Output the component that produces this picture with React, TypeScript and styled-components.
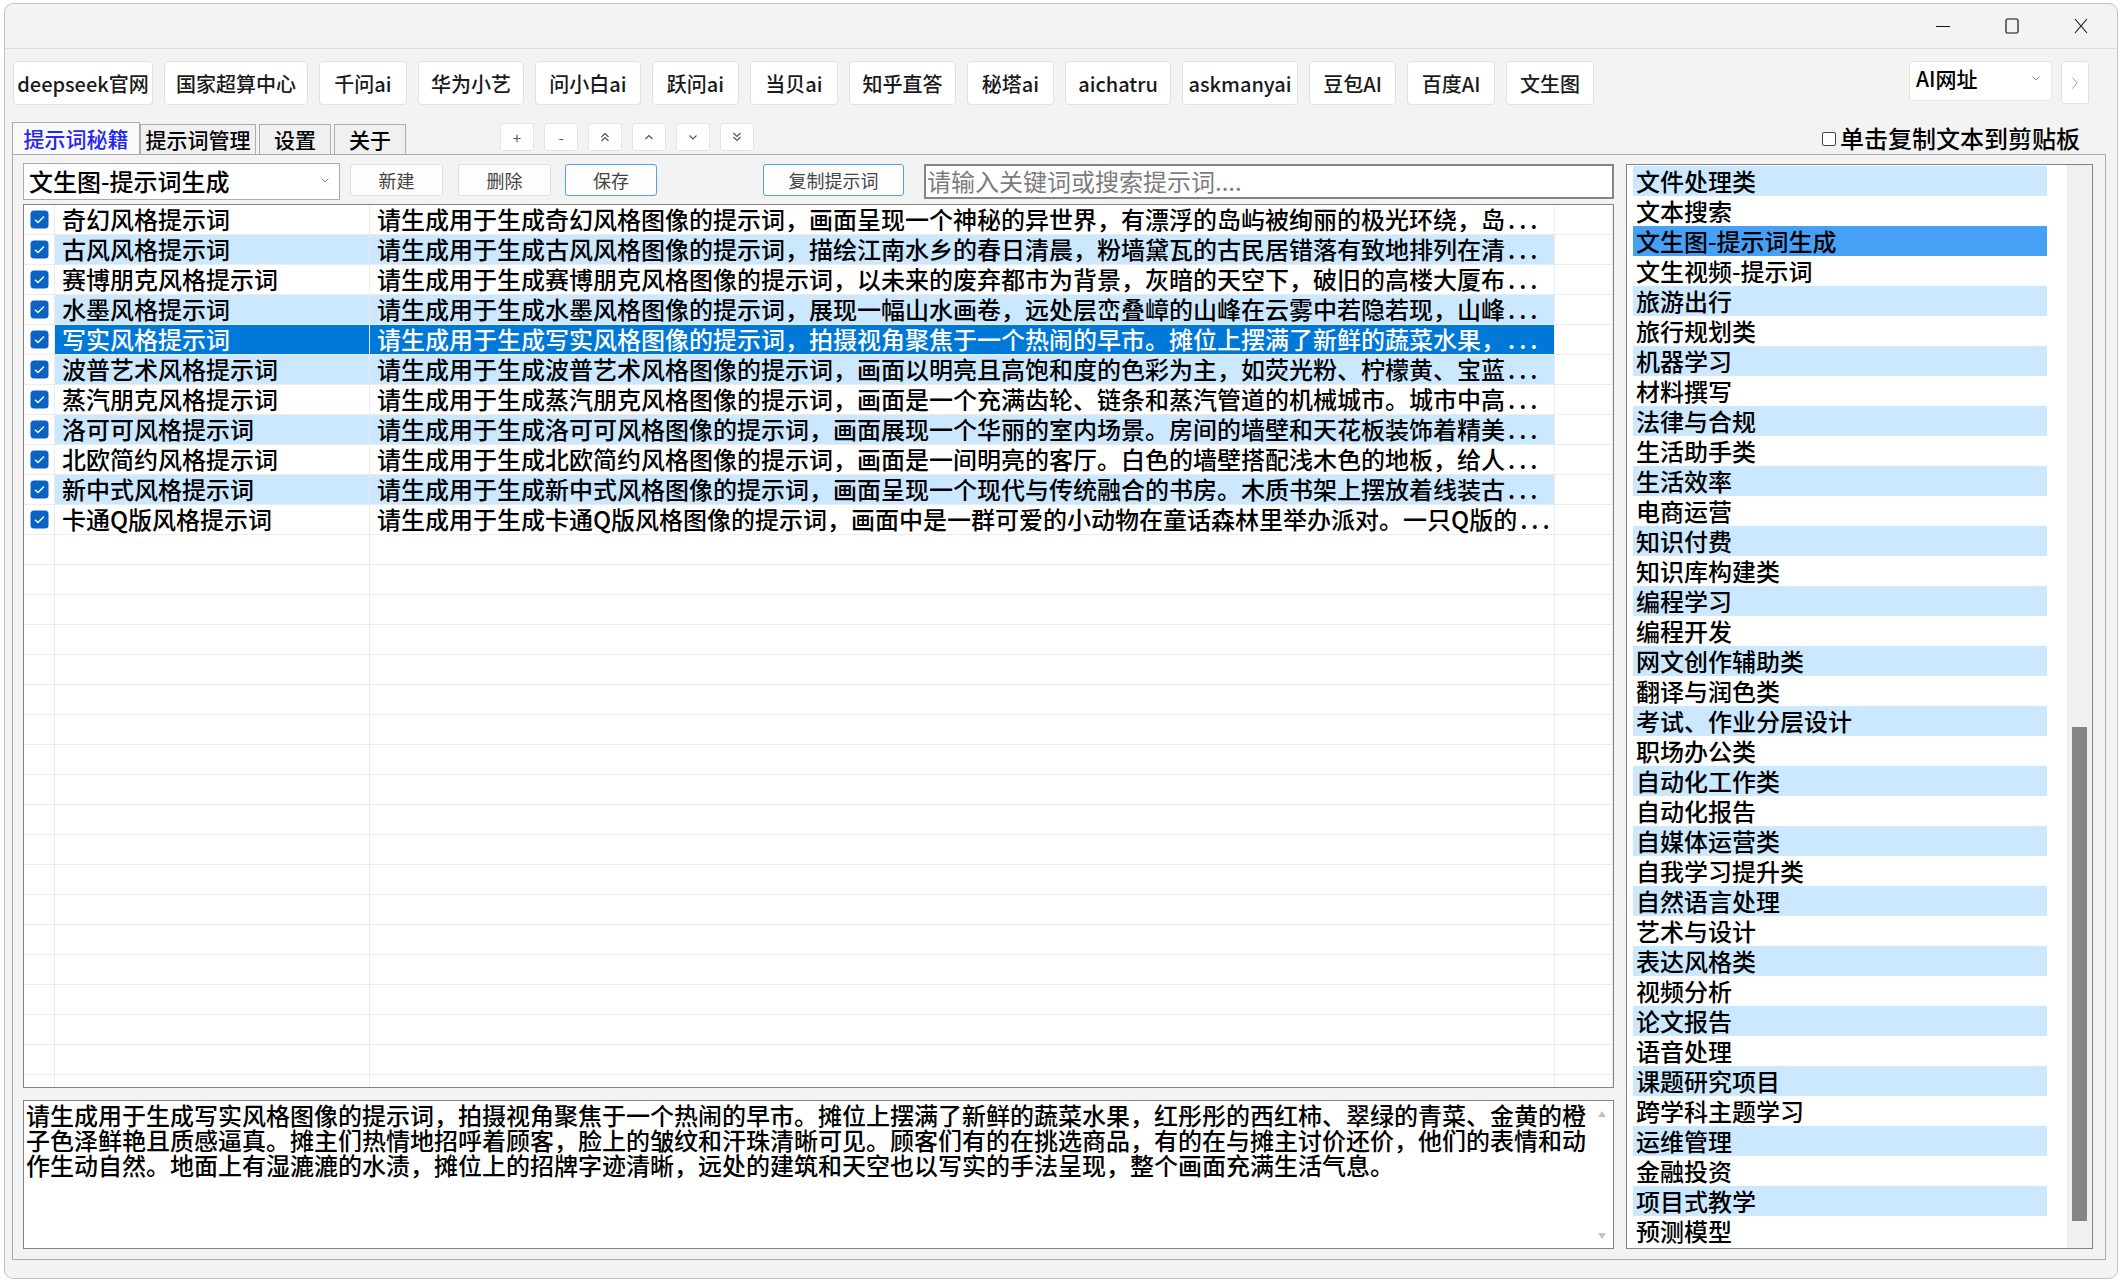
import React from 'react';
import styled, { createGlobalStyle } from 'styled-components';

const GlobalStyle = createGlobalStyle`
  html, body {
    margin: 0;
    padding: 0;
    background: #ffffff;
  }
  body {
    font-family: "Noto Sans CJK SC", "Noto Sans", sans-serif;
    color: #000;
  }
  * {
    box-sizing: border-box;
  }
`;

const links = [
  { label: 'deepseek官网', w: 140 },
  { label: '国家超算中心', w: 144 },
  { label: '千问ai', w: 88 },
  { label: '华为小艺', w: 106 },
  { label: '问小白ai', w: 106 },
  { label: '跃问ai', w: 87 },
  { label: '当贝ai', w: 88 },
  { label: '知乎直答', w: 107 },
  { label: '秘塔ai', w: 87 },
  { label: 'aichatru', w: 106 },
  { label: 'askmanyai', w: 116 },
  { label: '豆包AI', w: 87 },
  { label: '百度AI', w: 88 },
  { label: '文生图', w: 88 },
];

const tabs = [
  { label: '提示词秘籍', w: 128, ml: 0, active: true },
  { label: '提示词管理', w: 116, ml: 0, active: false },
  { label: '设置', w: 72, ml: 3, active: false },
  { label: '关于', w: 72, ml: 3, active: false },
];

const prompts = [
  ['奇幻风格提示词', '请生成用于生成奇幻风格图像的提示词，画面呈现一个神秘的异世界，有漂浮的岛屿被绚丽的极光环绕，岛'],
  ['古风风格提示词', '请生成用于生成古风风格图像的提示词，描绘江南水乡的春日清晨，粉墙黛瓦的古民居错落有致地排列在清'],
  ['赛博朋克风格提示词', '请生成用于生成赛博朋克风格图像的提示词，以未来的废弃都市为背景，灰暗的天空下，破旧的高楼大厦布'],
  ['水墨风格提示词', '请生成用于生成水墨风格图像的提示词，展现一幅山水画卷，远处层峦叠嶂的山峰在云雾中若隐若现，山峰'],
  ['写实风格提示词', '请生成用于生成写实风格图像的提示词，拍摄视角聚焦于一个热闹的早市。摊位上摆满了新鲜的蔬菜水果，'],
  ['波普艺术风格提示词', '请生成用于生成波普艺术风格图像的提示词，画面以明亮且高饱和度的色彩为主，如荧光粉、柠檬黄、宝蓝'],
  ['蒸汽朋克风格提示词', '请生成用于生成蒸汽朋克风格图像的提示词，画面是一个充满齿轮、链条和蒸汽管道的机械城市。城市中高'],
  ['洛可可风格提示词', '请生成用于生成洛可可风格图像的提示词，画面展现一个华丽的室内场景。房间的墙壁和天花板装饰着精美'],
  ['北欧简约风格提示词', '请生成用于生成北欧简约风格图像的提示词，画面是一间明亮的客厅。白色的墙壁搭配浅木色的地板，给人'],
  ['新中式风格提示词', '请生成用于生成新中式风格图像的提示词，画面呈现一个现代与传统融合的书房。木质书架上摆放着线装古'],
  ['卡通Q版风格提示词', '请生成用于生成卡通Q版风格图像的提示词，画面中是一群可爱的小动物在童话森林里举办派对。一只Q版的'],
];

const categories = [
  '文件处理类', '文本搜索', '文生图-提示词生成', '文生视频-提示词', '旅游出行', '旅行规划类',
  '机器学习', '材料撰写', '法律与合规', '生活助手类', '生活效率', '电商运营', '知识付费',
  '知识库构建类', '编程学习', '编程开发', '网文创作辅助类', '翻译与润色类', '考试、作业分层设计',
  '职场办公类', '自动化工作类', '自动化报告', '自媒体运营类', '自我学习提升类', '自然语言处理',
  '艺术与设计', '表达风格类', '视频分析', '论文报告', '语音处理', '课题研究项目', '跨学科主题学习',
  '运维管理', '金融投资', '项目式教学', '预测模型',
];

const detailText =
  '请生成用于生成写实风格图像的提示词，拍摄视角聚焦于一个热闹的早市。摊位上摆满了新鲜的蔬菜水果，红彤彤的西红柿、翠绿的青菜、金黄的橙\n' +
  '子色泽鲜艳且质感逼真。摊主们热情地招呼着顾客，脸上的皱纹和汗珠清晰可见。顾客们有的在挑选商品，有的在与摊主讨价还价，他们的表情和动\n' +
  '作生动自然。地面上有湿漉漉的水渍，摊位上的招牌字迹清晰，远处的建筑和天空也以写实的手法呈现，整个画面充满生活气息。';

const SELECTED_ROW = 4;
const SELECTED_CAT = 2;
const EMPTY_ROWS = 18;

const Window = styled.div`
  width: 2114px;
  height: 1276px;
  margin: 3px 0 0 4px;
  background: #f3f3f3;
  border: 1px solid #c4c4c4;
  border-radius: 9px;
  overflow: hidden;
  display: flex;
  flex-direction: column;
`;

const TitleBar = styled.div`
  height: 45px;
  flex: none;
  display: flex;
  justify-content: flex-end;
  align-items: center;
  padding-right: 2px;
  border-bottom: 1px solid #dcdcdc;
`;

const WinControl = styled.div`
  width: 69px;
  height: 44px;
  display: flex;
  align-items: center;
  justify-content: center;
`;

const Toolbar = styled.div`
  flex: none;
  margin-top: 12px;
  height: 44px;
  display: flex;
  align-items: flex-start;
  gap: 11px;
  padding: 0 28px 0 8px;
`;

const ToolButton = styled.button<{ $w: number }>`
  width: ${(p) => p.$w}px;
  height: 44px;
  flex: none;
  padding: 0;
  background: #ffffff;
  border: 1px solid #e2e2e2;
  border-radius: 4px;
  font-family: inherit;
  font-size: 20px;
  font-weight: 500;
  color: #1a1a1a;
  white-space: nowrap;
`;

const UrlSelect = styled.div`
  margin-left: auto;
  width: 143px;
  height: 40px;
  display: flex;
  align-items: center;
  justify-content: space-between;
  padding: 0 10px 6px 6px;
  background: #ffffff;
  border: 1px solid #e6e6e6;
  border-radius: 3px;
  font-size: 21px;
  font-weight: 500;
`;

const NextButton = styled.div`
  width: 28px;
  height: 43px;
  margin-left: -2px;
  display: flex;
  align-items: center;
  justify-content: center;
  background: #ffffff;
  border: 1px solid #e2e2e2;
  border-radius: 3px;
`;

const TabRow = styled.div`
  flex: none;
  margin-top: 17px;
  height: 32px;
  display: flex;
  align-items: flex-end;
  padding: 0 37px 0 7px;
`;

const Tab = styled.div<{ $w: number; $ml: number; $active: boolean }>`
  width: ${(p) => p.$w}px;
  margin-left: ${(p) => p.$ml}px;
  height: ${(p) => (p.$active ? 32 : 30)}px;
  display: flex;
  align-items: center;
  justify-content: center;
  border: 1px solid #acacac;
  border-bottom: none;
  background: ${(p) => (p.$active ? '#f9f9f9' : '#f0f0f0')};
  color: ${(p) => (p.$active ? '#2626f2' : '#000000')};
  font-size: 21px;
  font-weight: 500;
  padding-bottom: 2px;
`;

const MiniGroup = styled.div`
  display: flex;
  gap: 10px;
  margin-left: 94px;
  align-self: flex-start;
  margin-top: 1px;
`;

const MiniButton = styled.div`
  width: 34px;
  height: 28px;
  display: flex;
  align-items: center;
  justify-content: center;
  background: #ffffff;
  border: 1px solid #e4e4e4;
  border-radius: 3px;
  color: #555;
  font-size: 15px;
`;

const CopyOption = styled.label`
  margin-left: auto;
  align-self: center;
  display: flex;
  align-items: center;
  gap: 4px;
  font-size: 24px;
  font-weight: 500;
  line-height: 28px;
`;

const TinyBox = styled.span`
  width: 14px;
  height: 14px;
  border: 1px solid #444;
  border-radius: 2px;
  background: #fff;
  margin-top: 2px;
`;

const Panel = styled.div`
  flex: none;
  height: 1106px;
  margin: 0 11px 0 7px;
  border: 1px solid #acacac;
  background: #f3f3f3;
  display: grid;
  grid-template-columns: 1591px 1fr;
  column-gap: 12px;
  padding: 8px 12px 10px 10px;
`;

const LeftCol = styled.div`
  display: flex;
  flex-direction: column;
  min-height: 0;
`;

const Controls = styled.div`
  height: 37px;
  flex: none;
  display: flex;
  align-items: flex-start;
`;

const Combo = styled.div`
  width: 317px;
  height: 37px;
  display: flex;
  align-items: center;
  justify-content: space-between;
  padding: 0 9px 2px 5px;
  background: #fff;
  border: 1px solid #ababab;
  font-size: 24px;
  font-weight: 500;
`;

const ActionButton = styled.button<{ $w: number; $ml: number; $primary?: boolean }>`
  width: ${(p) => p.$w}px;
  margin-left: ${(p) => p.$ml}px;
  margin-top: 1px;
  height: 32px;
  padding: 0;
  background: #fdfdfd;
  border: 1px solid ${(p) => (p.$primary ? '#5a9ce4' : '#dedede')};
  border-radius: 3px;
  font-family: inherit;
  font-size: 18px;
  color: #444;
`;

const Search = styled.input`
  flex: 1;
  min-width: 0;
  margin-left: 20px;
  margin-top: 1px;
  height: 35px;
  border: 2px solid #858585;
  background: #fff;
  padding: 0 0 2px 1px;
  font-family: inherit;
  font-size: 24px;
  outline: none;
  &::placeholder {
    color: #7c7c7c;
  }
`;

const Table = styled.div`
  margin-top: 4px;
  height: 884px;
  flex: none;
  display: flex;
  flex-direction: column;
  border: 1px solid #828282;
  background: #fff;
`;

const Row = styled.div`
  flex: none;
  display: grid;
  grid-template-columns: 31px 315px 1185px 1fr;
  height: 30px;
`;

const Filler = styled.div`
  flex: 1;
  display: grid;
  grid-template-columns: 31px 315px 1185px 1fr;
  & > div {
    border-right: 1px solid #ececec;
  }
`;

const Cell = styled.div<{ $tone?: 'plain' | 'alt' | 'sel' }>`
  border-right: 1px solid #ececec;
  border-bottom: 1px solid #ececec;
  background: ${(p) => (p.$tone === 'alt' ? '#cce8ff' : p.$tone === 'sel' ? '#0078d7' : '#ffffff')};
  color: ${(p) => (p.$tone === 'sel' ? '#ffffff' : '#000000')};
  font-size: 24px;
  font-weight: 500;
  line-height: 28px;
  white-space: nowrap;
  padding-left: 7px;
`;

const CheckCell = styled.div`
  border-right: 1px solid #ececec;
  border-bottom: 1px solid #ececec;
  display: flex;
  align-items: center;
  justify-content: center;
  padding-left: 1px;
`;

const Dots = styled.span`
  letter-spacing: 4px;
  margin-left: 3px;
`;

const Detail = styled.div`
  margin-top: 12px;
  flex: 1;
  min-height: 0;
  display: flex;
  border: 1px solid #828282;
  background: #fff;
`;

const DetailText = styled.div`
  flex: 1;
  padding: 1px 0 0 2px;
  font-size: 24px;
  font-weight: 500;
  line-height: 25px;
  white-space: pre;
`;

const DetailScroll = styled.div`
  width: 22px;
  display: flex;
  flex-direction: column;
  align-items: center;
  justify-content: space-between;
  padding: 10px 0 9px;
`;

const CategoryList = styled.div`
  margin-top: 1px;
  height: 1085px;
  display: flex;
  border: 1px solid #828282;
  background: #fff;
  overflow: hidden;
`;

const Items = styled.div`
  width: 414px;
  margin-left: 6px;
  padding-top: 1px;
`;

const Item = styled.div<{ $tone: 'plain' | 'alt' | 'sel' }>`
  height: 30px;
  padding-left: 3px;
  font-size: 24px;
  font-weight: 500;
  line-height: 29px;
  white-space: nowrap;
  background: ${(p) => (p.$tone === 'alt' ? '#cce8ff' : p.$tone === 'sel' ? '#46a0f6' : '#ffffff')};
`;

const ScrollTrack = styled.div`
  margin-left: auto;
  width: 25px;
  background: #f0f0f0;
  padding: 562px 5px 0 5px;
`;

const ScrollThumb = styled.div`
  width: 15px;
  height: 494px;
  background: #858585;
`;

const Check = () => (
  <svg width="19" height="19" viewBox="0 0 19 19">
    <rect x="0.5" y="0.5" width="18" height="18" rx="3.5" fill="#0a63c2" />
    <path d="M5 9.8 L8 12.6 L14 6.5" fill="none" stroke="#ffffff" strokeWidth="1.4" />
  </svg>
);

const Chevron = ({ d }: { d: string }) => (
  <svg width="12" height="12" viewBox="0 0 12 12">
    <path d={d} fill="none" stroke="#555" strokeWidth="1.2" />
  </svg>
);

const SmallCaret = () => (
  <svg width="10" height="7" viewBox="0 0 10 7">
    <path d="M1.5 1.5 L5 5 L8.5 1.5" fill="none" stroke="#8a8a8a" strokeWidth="1" />
  </svg>
);

export default function App() {
  return (
    <>
      <GlobalStyle />
      <Window>
        <TitleBar>
          <WinControl>
            <svg width="16" height="16" viewBox="0 0 16 16">
              <path d="M1 8.5 H15" stroke="#111" strokeWidth="1.1" />
            </svg>
          </WinControl>
          <WinControl>
            <svg width="16" height="16" viewBox="0 0 16 16">
              <rect x="2" y="1" width="12" height="14" rx="1.5" fill="none" stroke="#111" strokeWidth="1.2" />
            </svg>
          </WinControl>
          <WinControl>
            <svg width="16" height="16" viewBox="0 0 16 16">
              <path d="M2 1 L14 15 M14 1 L2 15" stroke="#111" strokeWidth="1.1" />
            </svg>
          </WinControl>
        </TitleBar>

        <Toolbar>
          {links.map((l) => (
            <ToolButton key={l.label} $w={l.w}>
              {l.label}
            </ToolButton>
          ))}
          <UrlSelect>
            <span>AI网址</span>
            <SmallCaret />
          </UrlSelect>
          <NextButton>
            <svg width="8" height="14" viewBox="0 0 8 14">
              <path d="M1.5 1.5 L6 7 L1.5 12.5" fill="none" stroke="#9a9a9a" strokeWidth="1" />
            </svg>
          </NextButton>
        </Toolbar>

        <TabRow>
          {tabs.map((t) => (
            <Tab key={t.label} $w={t.w} $ml={t.ml} $active={t.active}>
              {t.label}
            </Tab>
          ))}
          <MiniGroup>
            <MiniButton>+</MiniButton>
            <MiniButton>-</MiniButton>
            <MiniButton>
              <Chevron d="M2.5 6 L6 2.5 L9.5 6 M2.5 10 L6 6.5 L9.5 10" />
            </MiniButton>
            <MiniButton>
              <Chevron d="M2.5 8 L6 4.5 L9.5 8" />
            </MiniButton>
            <MiniButton>
              <Chevron d="M2.5 4.5 L6 8 L9.5 4.5" />
            </MiniButton>
            <MiniButton>
              <Chevron d="M2.5 2 L6 5.5 L9.5 2 M2.5 6 L6 9.5 L9.5 6" />
            </MiniButton>
          </MiniGroup>
          <CopyOption>
            <TinyBox />
            单击复制文本到剪贴板
          </CopyOption>
        </TabRow>

        <Panel>
          <LeftCol>
            <Controls>
              <Combo>
                <span>文生图-提示词生成</span>
                <SmallCaret />
              </Combo>
              <ActionButton $w={93} $ml={10}>新建</ActionButton>
              <ActionButton $w={93} $ml={15}>删除</ActionButton>
              <ActionButton $w={92} $ml={14} $primary>保存</ActionButton>
              <ActionButton $w={141} $ml={106} $primary>复制提示词</ActionButton>
              <Search readOnly placeholder="请输入关键词或搜索提示词...." />
            </Controls>

            <Table>
              {prompts.map(([name, desc], i) => {
                const tone = i === SELECTED_ROW ? 'sel' : i % 2 === 1 ? 'alt' : 'plain';
                return (
                  <Row key={name}>
                    <CheckCell>
                      <Check />
                    </CheckCell>
                    <Cell $tone={tone}>{name}</Cell>
                    <Cell $tone={tone}>
                      {desc}
                      <Dots>...</Dots>
                    </Cell>
                    <Cell />
                  </Row>
                );
              })}
              {Array.from({ length: EMPTY_ROWS }).map((_, i) => (
                <Row key={'e' + i}>
                  <CheckCell />
                  <Cell />
                  <Cell />
                  <Cell />
                </Row>
              ))}
              <Filler>
                <div />
                <div />
                <div />
                <div />
              </Filler>
            </Table>

            <Detail>
              <DetailText>{detailText}</DetailText>
              <DetailScroll>
                <svg width="8" height="6" viewBox="0 0 8 6">
                  <path d="M0 6 L4 0 L8 6 Z" fill="#c2c2c2" />
                </svg>
                <svg width="8" height="6" viewBox="0 0 8 6">
                  <path d="M0 0 L4 6 L8 0 Z" fill="#c2c2c2" />
                </svg>
              </DetailScroll>
            </Detail>
          </LeftCol>

          <CategoryList>
            <Items>
              {categories.map((c, i) => (
                <Item key={c} $tone={i === SELECTED_CAT ? 'sel' : i % 2 === 0 ? 'alt' : 'plain'}>
                  {c}
                </Item>
              ))}
            </Items>
            <ScrollTrack>
              <ScrollThumb />
            </ScrollTrack>
          </CategoryList>
        </Panel>
      </Window>
    </>
  );
}
